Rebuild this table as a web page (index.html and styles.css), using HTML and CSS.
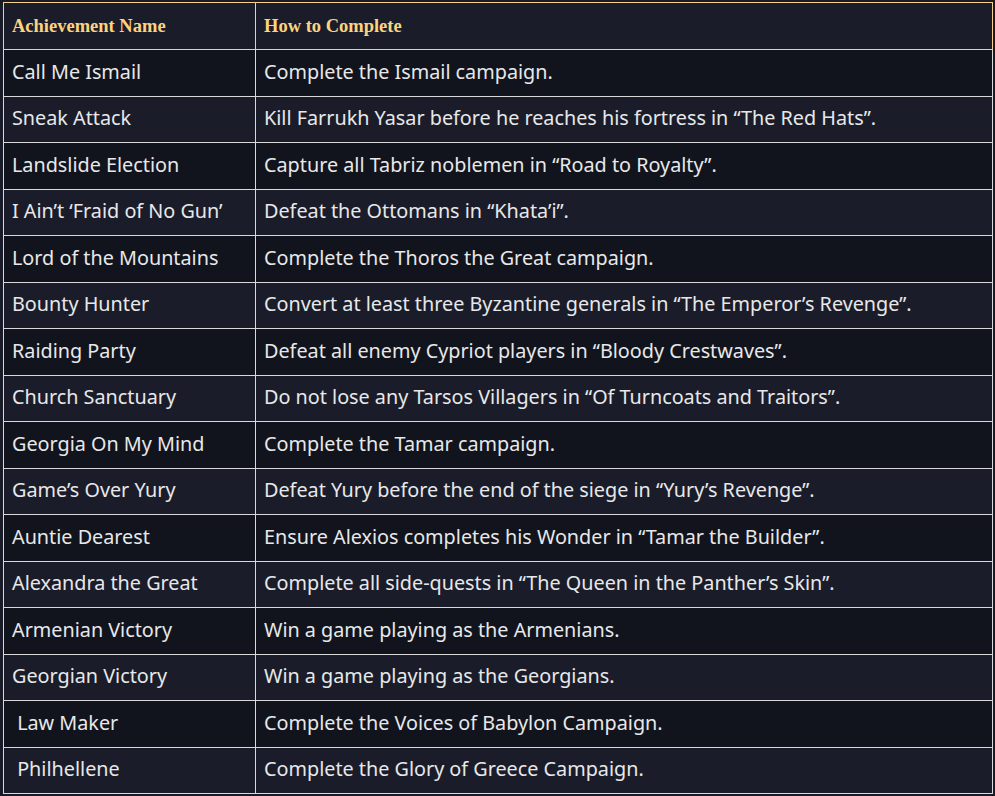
FILE: index.html
```html
<!DOCTYPE html>
<html lang="en">
<head>
    <meta charset="UTF-8">
    <meta name="viewport" content="width=device-width, initial-scale=1.0">
    <title>Achievements</title>
    <link rel="stylesheet" href="styles.css">
</head>
<body>
    <table class="achievements">
        <thead>
            <tr>
                <th class="col-name">Achievement Name</th>
                <th>How to Complete</th>
            </tr>
        </thead>
        <tbody>
            <tr><td>Call Me Ismail</td><td>Complete the Ismail campaign.</td></tr>
            <tr><td>Sneak Attack</td><td>Kill Farrukh Yasar before he reaches his fortress in “The Red Hats”.</td></tr>
            <tr><td>Landslide Election</td><td>Capture all Tabriz noblemen in “Road to Royalty”.</td></tr>
            <tr><td>I Ain’t ‘Fraid of No Gun’</td><td>Defeat the Ottomans in “Khata’i”.</td></tr>
            <tr><td>Lord of the Mountains</td><td>Complete the Thoros the Great campaign.</td></tr>
            <tr><td>Bounty Hunter</td><td>Convert at least three Byzantine generals in “The Emperor’s Revenge”.</td></tr>
            <tr><td>Raiding Party</td><td>Defeat all enemy Cypriot players in “Bloody Crestwaves”.</td></tr>
            <tr><td>Church Sanctuary</td><td>Do not lose any Tarsos Villagers in “Of Turncoats and Traitors”.</td></tr>
            <tr><td>Georgia On My Mind</td><td>Complete the Tamar campaign.</td></tr>
            <tr><td>Game’s Over Yury</td><td>Defeat Yury before the end of the siege in “Yury’s Revenge”.</td></tr>
            <tr><td>Auntie Dearest</td><td>Ensure Alexios completes his Wonder in “Tamar the Builder”.</td></tr>
            <tr><td>Alexandra the Great</td><td>Complete all side-quests in “The Queen in the Panther’s Skin”.</td></tr>
            <tr><td>Armenian Victory</td><td>Win a game playing as the Armenians.</td></tr>
            <tr><td>Georgian Victory</td><td>Win a game playing as the Georgians.</td></tr>
            <tr><td>&nbsp;Law Maker</td><td>Complete the Voices of Babylon Campaign.</td></tr>
            <tr><td>&nbsp;Philhellene</td><td>Complete the Glory of Greece Campaign.</td></tr>
        </tbody>
    </table>
</body>
</html>
```

FILE: styles.css
```css
* {
    margin: 0;
    padding: 0;
    box-sizing: border-box;
}

body {
    background: #191c28;
    font-family: 'Noto Sans', sans-serif;
    color: #e8e8ea;
    padding: 2px 0 0 3px;
}

.achievements {
    width: 990px;
    border-collapse: collapse;
}

.achievements th {
    height: 47px;
    padding: 0 8px;
    text-align: left;
    font-family: 'Liberation Serif', serif;
    font-size: 18.5px;
    font-weight: bold;
    color: #fdd37f;
    background: #1a1d29;
    border: 1.5px solid #f3d18a;
}

.achievements .col-name {
    width: 252px;
}

.achievements td {
    height: 46.5px;
    padding: 0 8px 2px;
    font-size: 19.8px;
    line-height: 1.3;
    border: 1.5px solid #d9d9dc;
    vertical-align: middle;
}

.achievements tbody tr:nth-child(odd) td {
    background: #11141c;
}

.achievements tbody tr:nth-child(even) td {
    background: #1a1d29;
}
```
